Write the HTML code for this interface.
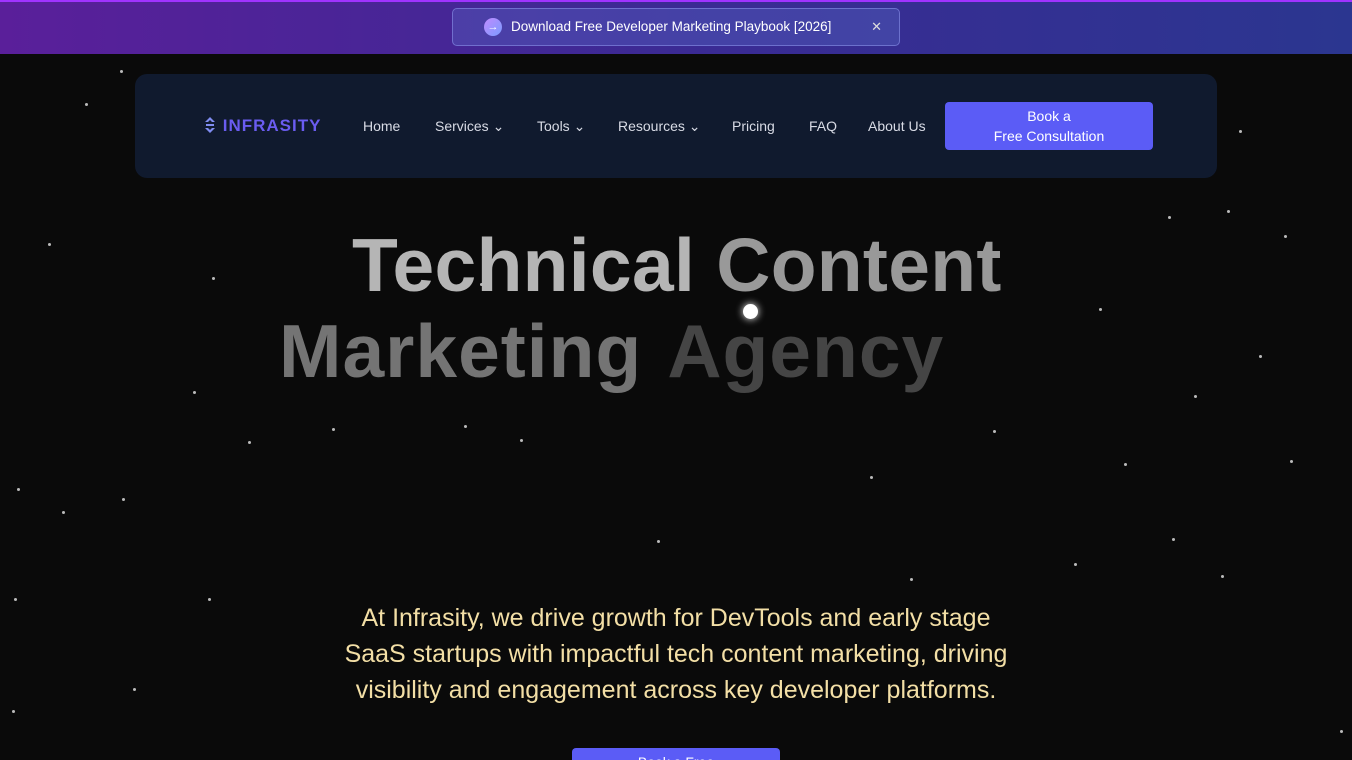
<!DOCTYPE html>
<html><head><meta charset="utf-8"><style>
*{margin:0;padding:0;box-sizing:border-box}
html,body{width:1352px;height:760px;overflow:hidden}
body{background:#0a0a0a;font-family:"Liberation Sans",sans-serif;position:relative}
.banner{position:absolute;left:0;top:0;width:1352px;height:54px;background:linear-gradient(90deg,#5a1f9a,#3b2a94 50%,#2b3690);box-shadow:inset 0 2px 0 #a033ff}
.pill{position:absolute;left:452px;top:8px;width:448px;height:38px;border:1px solid rgba(160,170,255,.45);border-radius:5px;background:rgba(90,110,200,.35);color:#fff;font-size:13.5px}
.pill .ic{position:absolute;left:31px;top:9px;width:18px;height:18px;border-radius:50%;background:linear-gradient(135deg,#c08bff,#7a9bff);color:#fff;font-size:11px;text-align:center;line-height:18px}
.pill .t{position:absolute;left:58px;top:10px}
.pill .x{position:absolute;right:17px;top:10px;font-size:13px;color:#ddd}
.nav{position:absolute;left:135px;top:74px;width:1082px;height:104px;background:#101a2e;border-radius:12px}
.logo{position:absolute;left:68px;top:42px;color:#6a5cf0;font-weight:bold;font-size:17px;letter-spacing:1px}
.nav a{position:absolute;top:44px;color:#d8dbe5;font-size:14px}
.btn{position:absolute;left:810px;top:28px;width:208px;height:48px;background:#5b5cf6;border-radius:4px;color:#fff;font-size:14px;text-align:center;line-height:20px;padding-top:4px}
h1{position:absolute;font-size:75px;font-weight:bold;white-space:nowrap}
.l1{top:222px;left:352px;letter-spacing:0.3px}
.l2{top:308px;left:279px;letter-spacing:1px;word-spacing:6px}
.p{position:absolute;left:226px;width:900px;top:600px;text-align:center;color:#f3dfa6;font-size:25px;line-height:36px}
.b2{position:absolute;left:572px;top:748px;width:208px;height:30px;background:#5b5cf6;border-radius:4px;color:#fff;text-align:center;font-size:14px;padding-top:6px}
.s{position:absolute;width:3px;height:3px;background:#bbb;border-radius:50%}
</style></head><body>
<div class="banner"><div class="pill"><span class="ic">→</span><span class="t">Download Free Developer Marketing Playbook [2026]</span><span class="x">✕</span></div></div>
<div class="nav">
<div class="logo"><svg width="14" height="18" viewBox="0 0 14 18" style="vertical-align:-3px"><path d="M2 6 L7 1 L12 6 L9 6 L7 4 L5 6Z M2 12 L7 17 L12 12 L9 12 L7 14 L5 12Z M3 8 L11 8 L11 10 L3 10Z" fill="#7f8cf0"/></svg> INFRASITY</div>
<a style="left:228px">Home</a>
<a style="left:300px">Services ⌄</a>
<a style="left:402px">Tools ⌄</a>
<a style="left:483px">Resources ⌄</a>
<a style="left:597px">Pricing</a>
<a style="left:674px">FAQ</a>
<a style="left:733px">About Us</a>
<div class="btn">Book a<br>Free Consultation</div>
</div>
<h1 class="l1"><span style="color:#b5b5b5">Technical</span> <span style="color:#999">Content</span></h1>
<h1 class="l2"><span style="color:#747474">Marketing</span> <span style="color:#454545">Agency</span></h1>
<div style="position:absolute;left:743px;top:304px;width:15px;height:15px;border-radius:50%;background:#fff;box-shadow:0 0 8px #fff"></div>
<div class="p">At Infrasity, we drive growth for DevTools and early stage<br>SaaS startups with impactful tech content marketing, driving<br>visibility and engagement across key developer platforms.</div>
<div class="b2">Book a Free</div>
<div class="s" style="left:85px;top:103px"></div><div class="s" style="left:48px;top:243px"></div><div class="s" style="left:212px;top:277px"></div><div class="s" style="left:193px;top:391px"></div><div class="s" style="left:248px;top:441px"></div><div class="s" style="left:17px;top:488px"></div><div class="s" style="left:122px;top:498px"></div><div class="s" style="left:62px;top:511px"></div><div class="s" style="left:464px;top:425px"></div><div class="s" style="left:520px;top:439px"></div><div class="s" style="left:1239px;top:130px"></div><div class="s" style="left:1227px;top:210px"></div><div class="s" style="left:1284px;top:235px"></div><div class="s" style="left:1259px;top:355px"></div><div class="s" style="left:1194px;top:395px"></div><div class="s" style="left:1099px;top:308px"></div><div class="s" style="left:1172px;top:538px"></div><div class="s" style="left:1221px;top:575px"></div><div class="s" style="left:910px;top:578px"></div><div class="s" style="left:1074px;top:563px"></div><div class="s" style="left:208px;top:598px"></div><div class="s" style="left:14px;top:598px"></div><div class="s" style="left:133px;top:688px"></div><div class="s" style="left:12px;top:710px"></div><div class="s" style="left:1340px;top:730px"></div><div class="s" style="left:1290px;top:460px"></div><div class="s" style="left:1168px;top:216px"></div><div class="s" style="left:657px;top:540px"></div><div class="s" style="left:480px;top:283px"></div><div class="s" style="left:120px;top:70px"></div><div class="s" style="left:332px;top:428px"></div><div class="s" style="left:870px;top:476px"></div><div class="s" style="left:993px;top:430px"></div><div class="s" style="left:1124px;top:463px"></div>
</body></html>
